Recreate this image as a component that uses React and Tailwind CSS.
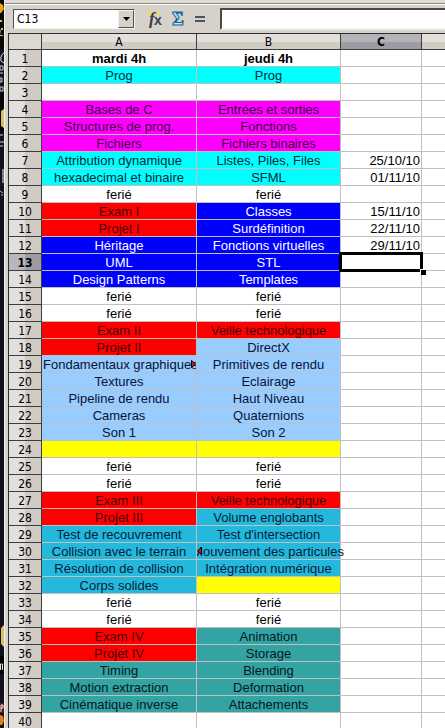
import React from "react";

const FILLS = {
  none: "bg-white text-black",
  cyan: "bg-[#00ffff] text-[#06283a]",
  magenta: "bg-[#ff00ff] text-[#3c0044]",
  red: "bg-[#ff0000] text-[#420000]",
  blue: "bg-[#0000ff] text-white",
  sky: "bg-[#99ccff] text-[#0a1236]",
  yellow: "bg-[#ffff00] text-black",
  aqua: "bg-[#23b8dc] text-[#061c38]",
  teal: "bg-[#33a3a3] text-[#04191c]",
};

const ROWS = [
  ["mardi 4h", "none", "jeudi 4h", "none"],
  ["Prog", "cyan", "Prog", "cyan"],
  ["", "none", "", "none"],
  ["Bases de C", "magenta", "Entrées et sorties", "magenta"],
  ["Structures de prog.", "magenta", "Fonctions", "magenta"],
  ["Fichiers", "magenta", "Fichiers binaires", "magenta"],
  ["Attribution dynamique", "cyan", "Listes, Piles, Files", "cyan", "25/10/10"],
  ["hexadecimal et binaire", "cyan", "SFML", "cyan", "01/11/10"],
  ["ferié", "none", "ferié", "none"],
  ["Exam I", "red", "Classes", "blue", "15/11/10"],
  ["Projet I", "red", "Surdéfinition", "blue", "22/11/10"],
  ["Héritage", "blue", "Fonctions virtuelles", "blue", "29/11/10"],
  ["UML", "blue", "STL", "blue"],
  ["Design Patterns", "blue", "Templates", "blue"],
  ["ferié", "none", "ferié", "none"],
  ["ferié", "none", "ferié", "none"],
  ["Exam II", "red", "Veille technologique", "red"],
  ["Projet II", "red", "DirectX", "sky"],
  ["Fondamentaux graphiques", "sky", "Primitives de rendu", "sky"],
  ["Textures", "sky", "Eclairage", "sky"],
  ["Pipeline de rendu", "sky", "Haut Niveau", "sky"],
  ["Cameras", "sky", "Quaternions", "sky"],
  ["Son 1", "sky", "Son 2", "sky"],
  ["", "yellow", "", "yellow"],
  ["ferié", "none", "ferié", "none"],
  ["ferié", "none", "ferié", "none"],
  ["Exam III", "red", "Veille technologique", "red"],
  ["Projet III", "red", "Volume englobants", "aqua"],
  ["Test de recouvrement", "aqua", "Test d'intersection", "aqua"],
  ["Collision avec le terrain", "aqua", "Mouvement des particules", "aqua"],
  ["Résolution de collision", "aqua", "Intégration numérique", "aqua"],
  ["Corps solides", "aqua", "", "yellow"],
  ["ferié", "none", "ferié", "none"],
  ["ferié", "none", "ferié", "none"],
  ["Exam IV", "red", "Animation", "teal"],
  ["Projet IV", "red", "Storage", "teal"],
  ["Timing", "teal", "Blending", "teal"],
  ["Motion extraction", "teal", "Deformation", "teal"],
  ["Cinématique inverse", "teal", "Attachements", "teal"],
  ["", "none", "", "none"],
];

const CELL = "relative h-[17px] border-b border-r border-[#c0c0c0] p-0 pt-0.5 text-center leading-[14px] whitespace-nowrap";
const ROW_HEAD =
  "h-[17px] border-b border-r border-[#3c3c3c] p-0 pt-0.5 text-center font-['DejaVu_Sans_Condensed','DejaVu_Sans',sans-serif] text-xs leading-[14px]";
const COL_HEAD =
  "h-4 border-b border-r border-[#3c3c3c] p-0 font-['DejaVu_Sans_Condensed','DejaVu_Sans',sans-serif] text-xs leading-[14px]";
const PLAIN_COL = "bg-linear-to-b from-[#e2e0dc] from-50% to-[#d0ccc3] to-50% font-normal";

function OverflowMark({ side }) {
  return (
    <svg
      className={side === "right" ? "absolute top-1 right-0" : "absolute top-1 left-0"}
      width="5"
      height="8"
      viewBox="0 0 5 8"
      aria-hidden="true"
    >
      <path
        d={side === "right" ? "M.5.5 4.5 4 .5 7.5z" : "M4.5.5.5 4l4 3.5z"}
        fill="#e01010"
        stroke="#000"
      />
    </svg>
  );
}

function Content({ text }) {
  if (text === "Fondamentaux graphiques") {
    return (
      <div className="overflow-hidden pl-px text-left">
        {text}
        <OverflowMark side="right" />
      </div>
    );
  }
  if (text === "Mouvement des particules") {
    return (
      <>
        <div className="absolute top-0.5 left-0 z-10 flex w-[147px] justify-end overflow-hidden">{text}</div>
        <span className="absolute inset-0 z-20">
          <OverflowMark side="left" />
        </span>
      </>
    );
  }
  return text;
}

function Desktop() {
  return (
    <div className="w-1 shrink-0 overflow-hidden bg-[#10131f]">
      <svg width="4" height="728" viewBox="0 0 4 728" aria-hidden="true">
        <rect width="4" height="50" fill="#080808" />
        <path d="M0 3l3 2 1 4-3 4H0z" fill="#e8a318" />
        <path d="M0 20h2v2H0zM1 28h2v2H0v5h3v1H0z" fill="#d8c06a" />
        <path d="M4 53Q0 55 1 61l3 2" fill="none" stroke="#ddd" />
        <path d="M0 66h3v4H0zM0 73h3M0 78h2v4H0zM0 87h3v4H0z" fill="none" stroke="#ccc" />
        <rect y="92" width="4" height="40" fill="#050505" />
        <path d="M4 109l-3 2v15l3 2z" fill="#d9bf62" />
        <path d="M0 135h3M0 142h4M0 146h3" stroke="#ccc" />
        <rect x="2" y="169" width="2" height="14" fill="#7c8290" />
        <path d="M0 191l3 2M1 195h2" stroke="#d8a0ac" />
        <path d="M4 625l-3 3v16l3 3z" fill="#d9bf62" />
        <rect y="656" width="4" height="18" fill="#000" />
        <path d="M.5 670v-6h2v6" fill="none" stroke="#ddd" />
        <path d="M0 703h4v10H0z" fill="#5a1410" />
        <path d="M1 712v-7h2v3H1" fill="none" stroke="#eee" />
        <path d="M0 715l3 1 1 5-2 4H0z" fill="#e67d18" />
      </svg>
    </div>
  );
}

function Toolbar() {
  return (
    <div className="flex h-[33px] shrink-0 flex-col bg-[#d6d2ca]">
      <div className="h-1 shrink-0 border-b border-[#8a8780] bg-[#dedbd5]" />
      <div className="flex flex-1 items-center border-t border-white pl-2">
        <div className="flex h-5 w-[122px] border border-t-[#55534e] border-r-[#f4f2ee] border-b-[#f4f2ee] border-l-[#55534e] bg-white">
          <input
            aria-label="Zone de nom"
            defaultValue="C13"
            className="min-w-0 flex-1 bg-white pl-[3px] font-['DejaVu_Sans_Condensed','DejaVu_Sans',sans-serif] text-xs text-black outline-none"
          />
          <button
            aria-label="Ouvrir la liste"
            className="flex w-4 items-center justify-center border border-t-[#f4f2ee] border-r-[#55534e] border-b-[#55534e] border-l-[#f4f2ee] bg-[#d6d2ca]"
          >
            <svg width="7" height="4" viewBox="0 0 7 4" aria-hidden="true">
              <path d="M0 0h7L3.5 4z" fill="#000" />
            </svg>
          </button>
        </div>
        <button aria-label="Assistant fonctions" className="ml-[11px] h-[18px] w-[18px]">
          <svg className="overflow-visible" width="18" height="18" viewBox="0 0 18 18" aria-hidden="true">
            <path
              d="M3 0l1 2 2 1-2 1-1 2-1-2-2-1 2-1zM12 1l1 2 2 1-2 1-1 2-1-2-2-1 2-1zM7 0l1 2-1 2-1-2z"
              fill="#f3dc52"
            />
            <text x="3" y="14" fontFamily="Liberation Serif, serif" fontStyle="italic" fontWeight="bold" fontSize="17" fill="#34404c">
              f
            </text>
            <text x="8" y="15" fontFamily="Liberation Sans, sans-serif" fontWeight="bold" fontSize="14" fill="#34404c">
              x
            </text>
          </svg>
        </button>
        <button aria-label="Somme" className="ml-[6px] h-[18px] w-4">
          <svg className="overflow-visible" width="16" height="18" viewBox="0 0 16 18" aria-hidden="true">
            <text
              x="2"
              y="15"
              fontFamily="Liberation Serif, serif"
              fontWeight="bold"
              fontSize="18"
              fill="#c9e6f6"
              stroke="#15639c"
              strokeWidth="1"
            >
              Σ
            </text>
          </svg>
        </button>
        <button aria-label="Fonction" className="ml-2 h-[18px] w-3">
          <svg width="12" height="18" viewBox="0 0 12 18" aria-hidden="true">
            <path d="M1 7h10M1 11h10" stroke="#4b5560" strokeWidth="2" />
          </svg>
        </button>
        <input
          aria-label="Ligne de saisie"
          className="ml-[14px] h-[22px] min-w-0 flex-1 border-2 border-r-0 border-t-[#4a4945] border-b-[#f0eeea] border-l-[#4a4945] bg-white outline-none"
        />
      </div>
    </div>
  );
}

export default function App() {
  return (
    <div className="flex h-screen overflow-hidden bg-white font-['Liberation_Sans',Arial,sans-serif] text-[13px] leading-4">
      <Desktop />
      <div className="flex min-w-0 flex-1 flex-col border-l border-[#f2f1ee] bg-[#d6d2ca]">
        <Toolbar />
        <div className="ml-[3px] border-t border-l border-[#2f2f2f] bg-white">
          <table className="w-full table-fixed border-separate border-spacing-0">
            <colgroup>
              <col className="w-[33px]" />
              <col className="w-[155px]" />
              <col className="w-36" />
              <col className="w-[81px]" />
              <col />
            </colgroup>
            <thead>
              <tr>
                <th className={`${COL_HEAD} bg-[#dcd9d3]`} />
                <th scope="col" className={`${COL_HEAD} ${PLAIN_COL}`}>A</th>
                <th scope="col" className={`${COL_HEAD} ${PLAIN_COL}`}>B</th>
                <th
                  scope="col"
                  className={`${COL_HEAD} bg-linear-to-b from-[#b4b4b8] from-50% to-[#9c9ca2] to-50% font-bold`}
                >
                  C
                </th>
                <th className="h-4 border-b border-[#3c3c3c] bg-linear-to-b from-[#e2e0dc] from-50% to-[#d0ccc3] to-50% p-0" />
              </tr>
            </thead>
            <tbody>
              {ROWS.map(([a, fillA, b, fillB, date], i) => (
                <tr key={i} className={i === 0 ? "font-bold" : ""}>
                  <th
                    scope="row"
                    className={`${ROW_HEAD} ${
                      i === 12
                        ? "bg-linear-to-r from-[#b8b8bc] from-50% to-[#9c9ca2] to-50% font-bold"
                        : "bg-linear-to-r from-[#e2e0dc] from-50% to-[#d0ccc4] to-50% font-normal"
                    }`}
                  >
                    {i + 1}
                  </th>
                  <td className={`${CELL} ${FILLS[fillA]}`}>
                    <Content text={a} />
                  </td>
                  <td className={`${CELL} ${FILLS[fillB]}`}>
                    <Content text={b} />
                  </td>
                  <td className="relative h-[17px] border-r border-b border-[#c0c0c0] p-0 pt-0.5 pr-px text-right leading-[14px]">
                    {date}
                    {i === 12 && (
                      <div className="absolute -top-[2px] -right-[2px] -bottom-[2px] -left-[2px] z-10 border-[3px] border-black">
                        <span className="absolute -right-[6px] -bottom-[6px] h-[6px] w-[6px] border-t border-l border-white bg-black" />
                      </div>
                    )}
                  </td>
                  <td className="h-[17px] border-b border-[#c0c0c0] p-0" />
                </tr>
              ))}
            </tbody>
          </table>
        </div>
      </div>
    </div>
  );
}
